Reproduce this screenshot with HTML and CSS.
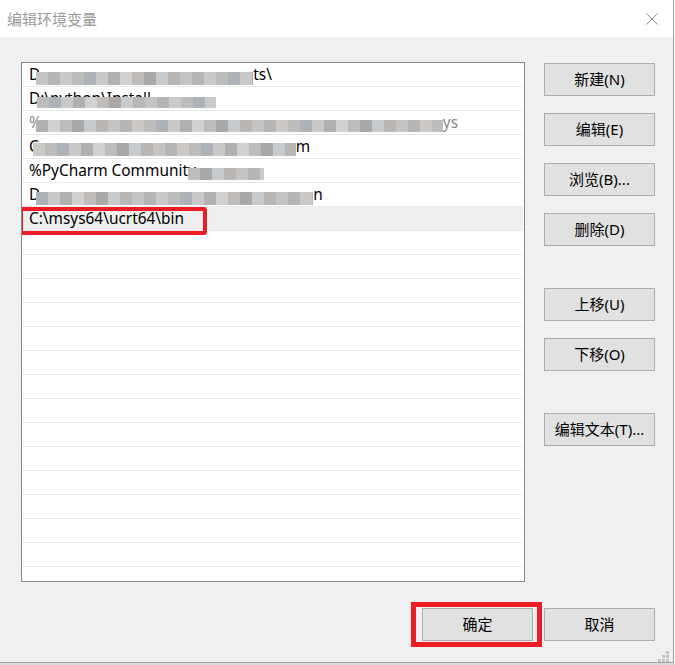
FILE: index.html
```html
<!DOCTYPE html>
<html lang="zh-CN">
<head>
<meta charset="utf-8">
<title>编辑环境变量</title>
<link rel="stylesheet" href="styles.css">
</head>
<body>
<div class="window">
  <div class="titlebar">
    <span class="title">编辑环境变量</span>
    <svg class="close" width="12" height="12" viewBox="0 0 12 12"><path d="M0.5 0.5 L11.5 11.5 M11.5 0.5 L0.5 11.5" stroke="#8a8a8a" stroke-width="1" fill="none"/></svg>
  </div>
  <div class="main">
    <div class="list">
      <div class="row"><span>D</span><span class="mz mz1"></span><span>ts\</span></div>
      <div class="row"><span>D:\python\Install</span><span class="mz mz2"></span></div>
      <div class="row"><span class="faint">%</span><span class="mz mz3"></span><span class="faint">ys</span></div>
      <div class="row"><span>C</span><span class="mz mz4"></span><span>m</span></div>
      <div class="row"><span>%PyCharm Community</span><span class="mz mz5"></span></div>
      <div class="row"><span>D</span><span class="mz mz6"></span><span>n</span></div>
      <div class="row selected marked"><span>C:\msys64\ucrt64\bin</span></div>
      <div class="row"></div>
      <div class="row"></div>
      <div class="row"></div>
      <div class="row"></div>
      <div class="row"></div>
      <div class="row"></div>
      <div class="row"></div>
      <div class="row"></div>
      <div class="row"></div>
      <div class="row"></div>
      <div class="row"></div>
      <div class="row"></div>
      <div class="row"></div>
      <div class="row"></div>
      <div class="row"></div>
    </div>
    <div class="side">
      <button class="btn">新建(N)</button>
      <button class="btn">编辑(E)</button>
      <button class="btn">浏览(B)...</button>
      <button class="btn">删除(D)</button>
      <button class="btn group">上移(U)</button>
      <button class="btn">下移(O)</button>
      <button class="btn group">编辑文本(T)...</button>
    </div>
  </div>
  <div class="footer">
    <span class="mark"><button class="btn">确定</button></span>
    <button class="btn">取消</button>
  </div>
  <svg class="grip" width="11" height="11" viewBox="0 0 11 11">
    <rect x="8" y="0" width="3" height="3" fill="#c3c3c3"/>
    <rect x="4" y="4" width="3" height="3" fill="#c3c3c3"/>
    <rect x="8" y="4" width="3" height="3" fill="#c3c3c3"/>
    <rect x="0" y="8" width="3" height="3" fill="#c3c3c3"/>
    <rect x="4" y="8" width="3" height="3" fill="#c3c3c3"/>
    <rect x="8" y="8" width="3" height="3" fill="#c3c3c3"/>
  </svg>
</div>
</body>
</html>
```
FILE: styles.css
```css
html, body {
  margin: 0;
  padding: 0;
}
body {
  background: #d9d9d9;
  width: 675px;
  height: 665px;
  overflow: hidden;
  font-family: "Noto Sans", "Noto Sans CJK SC", sans-serif;
  font-size: 15px;
  color: #000;
}
.window {
  position: relative;
  width: 674px;
  height: 663px;
  box-sizing: border-box;
  background: #f0f0f0;
  border-right: 1px solid #9f9f9f;
  border-bottom: 1px solid #a6a6a6;
  box-shadow: 1px 0 0 #ffffff;
}
.titlebar {
  height: 37px;
  background: #ffffff;
  display: flex;
  align-items: center;
  justify-content: space-between;
  padding: 0 15px 0 7px;
}
.title {
  font-family: "Noto Sans CJK SC", sans-serif;
  font-size: 15px;
  color: #999999;
  line-height: 1;
}
.close {
  display: block;
}
.main {
  display: flex;
  padding: 25px 0 0 21px;
}
.list {
  width: 504px;
  height: 520px;
  box-sizing: border-box;
  border: 1px solid #828790;
  background: #ffffff;
  overflow: hidden;
  padding: 0 1px;
  font-size: 15.4px;
}
.row {
  position: relative;
  height: 23px;
  border-bottom: 1px solid #ebebeb;
  display: flex;
  align-items: center;
  padding-left: 6px;
  white-space: nowrap;
  line-height: 1;
}
.row.selected {
  background: #efefef;
}
.marked::after {
  content: "";
  position: absolute;
  left: -4px;
  top: 0;
  width: 188px;
  height: 28px;
  box-sizing: border-box;
  border: 4px solid #ee1c24;
  border-radius: 3px;
}
.faint {
  color: #8a8a8a;
}
.mz {
  display: inline-block;
  flex: none;
  align-self: flex-start;
  position: relative;
  background-image: linear-gradient(90deg,
    #c4c4c4 0 12px, #b5b5b5 12px 24px, #cbc8c5 24px 36px, #bcbcbc 36px 48px,
    #adb2b8 48px 60px, #c9c9c9 60px 72px, #b1b1b1 72px 84px, #d1d1d1 84px 96px,
    #bfbcb9 96px 108px, #a9a9a9 108px 120px, #c7cbce 120px 132px, #b9b6b4 132px 144px);
  background-size: 144px 100%;
}
.mz1 { margin-left: -4px; width: 217px; height: 13px; margin-top: 9px; background-position: 0 0; }
.mz2 { margin-left: -114px; width: 179px; height: 11px; margin-top: 10px; background-position: -36px 0; }
.mz3 { margin-left: -6px; width: 407px; height: 12px; margin-top: 9px; background-position: -72px 0; }
.mz4 { margin-left: -6px; width: 263px; height: 13px; margin-top: 8px; background-position: -24px 0; }
.mz5 { margin-left: -8px; width: 76px; height: 12px; margin-top: 9px; background-position: -96px 0; }
.mz6 { margin-left: -4px; width: 277px; height: 13px; margin-top: 9px; background-position: -48px 0; }
.side {
  display: flex;
  flex-direction: column;
  margin-left: 19px;
  padding-top: 1px;
  gap: 17px;
}
.btn {
  width: 111px;
  height: 33px;
  box-sizing: border-box;
  background: #e1e1e1;
  border: 1px solid #adadad;
  border-radius: 0;
  margin: 0;
  padding: 0;
  font-family: "Noto Sans", "Noto Sans CJK SC", sans-serif;
  font-size: 15px;
  color: #000;
  line-height: 1;
}
.side .group {
  margin-top: 25px;
}
.footer {
  display: flex;
  justify-content: flex-end;
  gap: 11px;
  padding: 26px 18px 0 0;
}
.mark {
  position: relative;
  display: block;
}
.mark .btn {
  display: block;
}
.mark::after {
  content: "";
  position: absolute;
  left: -11px;
  top: -6px;
  width: 131px;
  height: 45px;
  box-sizing: border-box;
  border: 5px solid #ee1c24;
}
.grip {
  position: absolute;
  right: 4px;
  bottom: 0;
  display: block;
}
```
